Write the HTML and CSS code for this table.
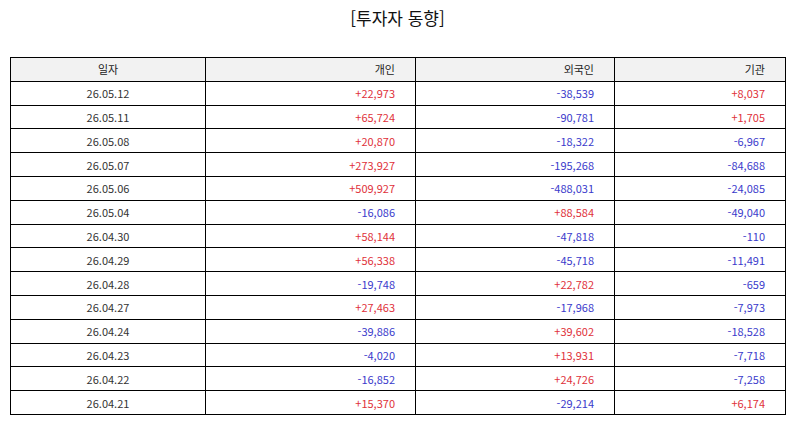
FILE: index.html
```html
<!DOCTYPE html>
<html lang="ko">
<head>
<meta charset="utf-8">
<title>투자자 동향</title>
<link rel="stylesheet" href="styles.css">
</head>
<body>
<h1 class="title">[투자자 동향]</h1>
<table class="grid">
  <colgroup>
    <col class="c1"><col class="c2"><col class="c3"><col class="c4">
  </colgroup>
  <thead>
    <tr><th class="center">일자</th><th>개인</th><th>외국인</th><th>기관</th></tr>
  </thead>
  <tbody>
    <tr><td class="center">26.05.12</td><td class="up">+22,973</td><td class="down">-38,539</td><td class="up">+8,037</td></tr>
    <tr><td class="center">26.05.11</td><td class="up">+65,724</td><td class="down">-90,781</td><td class="up">+1,705</td></tr>
    <tr><td class="center">26.05.08</td><td class="up">+20,870</td><td class="down">-18,322</td><td class="down">-6,967</td></tr>
    <tr><td class="center">26.05.07</td><td class="up">+273,927</td><td class="down">-195,268</td><td class="down">-84,688</td></tr>
    <tr><td class="center">26.05.06</td><td class="up">+509,927</td><td class="down">-488,031</td><td class="down">-24,085</td></tr>
    <tr><td class="center">26.05.04</td><td class="down">-16,086</td><td class="up">+88,584</td><td class="down">-49,040</td></tr>
    <tr><td class="center">26.04.30</td><td class="up">+58,144</td><td class="down">-47,818</td><td class="down">-110</td></tr>
    <tr><td class="center">26.04.29</td><td class="up">+56,338</td><td class="down">-45,718</td><td class="down">-11,491</td></tr>
    <tr><td class="center">26.04.28</td><td class="down">-19,748</td><td class="up">+22,782</td><td class="down">-659</td></tr>
    <tr><td class="center">26.04.27</td><td class="up">+27,463</td><td class="down">-17,968</td><td class="down">-7,973</td></tr>
    <tr><td class="center">26.04.24</td><td class="down">-39,886</td><td class="up">+39,602</td><td class="down">-18,528</td></tr>
    <tr><td class="center">26.04.23</td><td class="down">-4,020</td><td class="up">+13,931</td><td class="down">-7,718</td></tr>
    <tr><td class="center">26.04.22</td><td class="down">-16,852</td><td class="up">+24,726</td><td class="down">-7,258</td></tr>
    <tr><td class="center">26.04.21</td><td class="up">+15,370</td><td class="down">-29,214</td><td class="up">+6,174</td></tr>
  </tbody>
</table>
</body>
</html>
```
FILE: styles.css
```css
html, body {
  margin: 0;
  padding: 0;
  background: #ffffff;
}
body {
  font-family: "Noto Sans CJK KR", "Noto Sans", sans-serif;
  color: #222;
  padding: 0 9px 0 10px;
}
.title {
  margin: 0;
  padding-top: 6px;
  height: 57px;
  box-sizing: border-box;
  text-align: center;
  font-size: 17px;
  font-weight: 400;
  line-height: 24px;
  color: #111;
}
.grid {
  width: 775px;
  border-collapse: collapse;
  table-layout: fixed;
  font-size: 11px;
}
.c1 { width: 195px; }
.c2 { width: 210px; }
.c3 { width: 199px; }
.c4 { width: 171px; }
.grid th, .grid td {
  border: 1.3px solid #000;
  height: 22.8px;
  padding: 0 20px 0 4px;
  text-align: right;
  line-height: 14px;
  font-weight: 400;
  color: #333;
}
.grid th {
  background: #f2f2f2;
  color: #222;
}
.grid .center {
  text-align: center;
  padding: 0;
}
.grid td.up { color: #e0313a; }
.grid td.down { color: #3a3acb; }
```
